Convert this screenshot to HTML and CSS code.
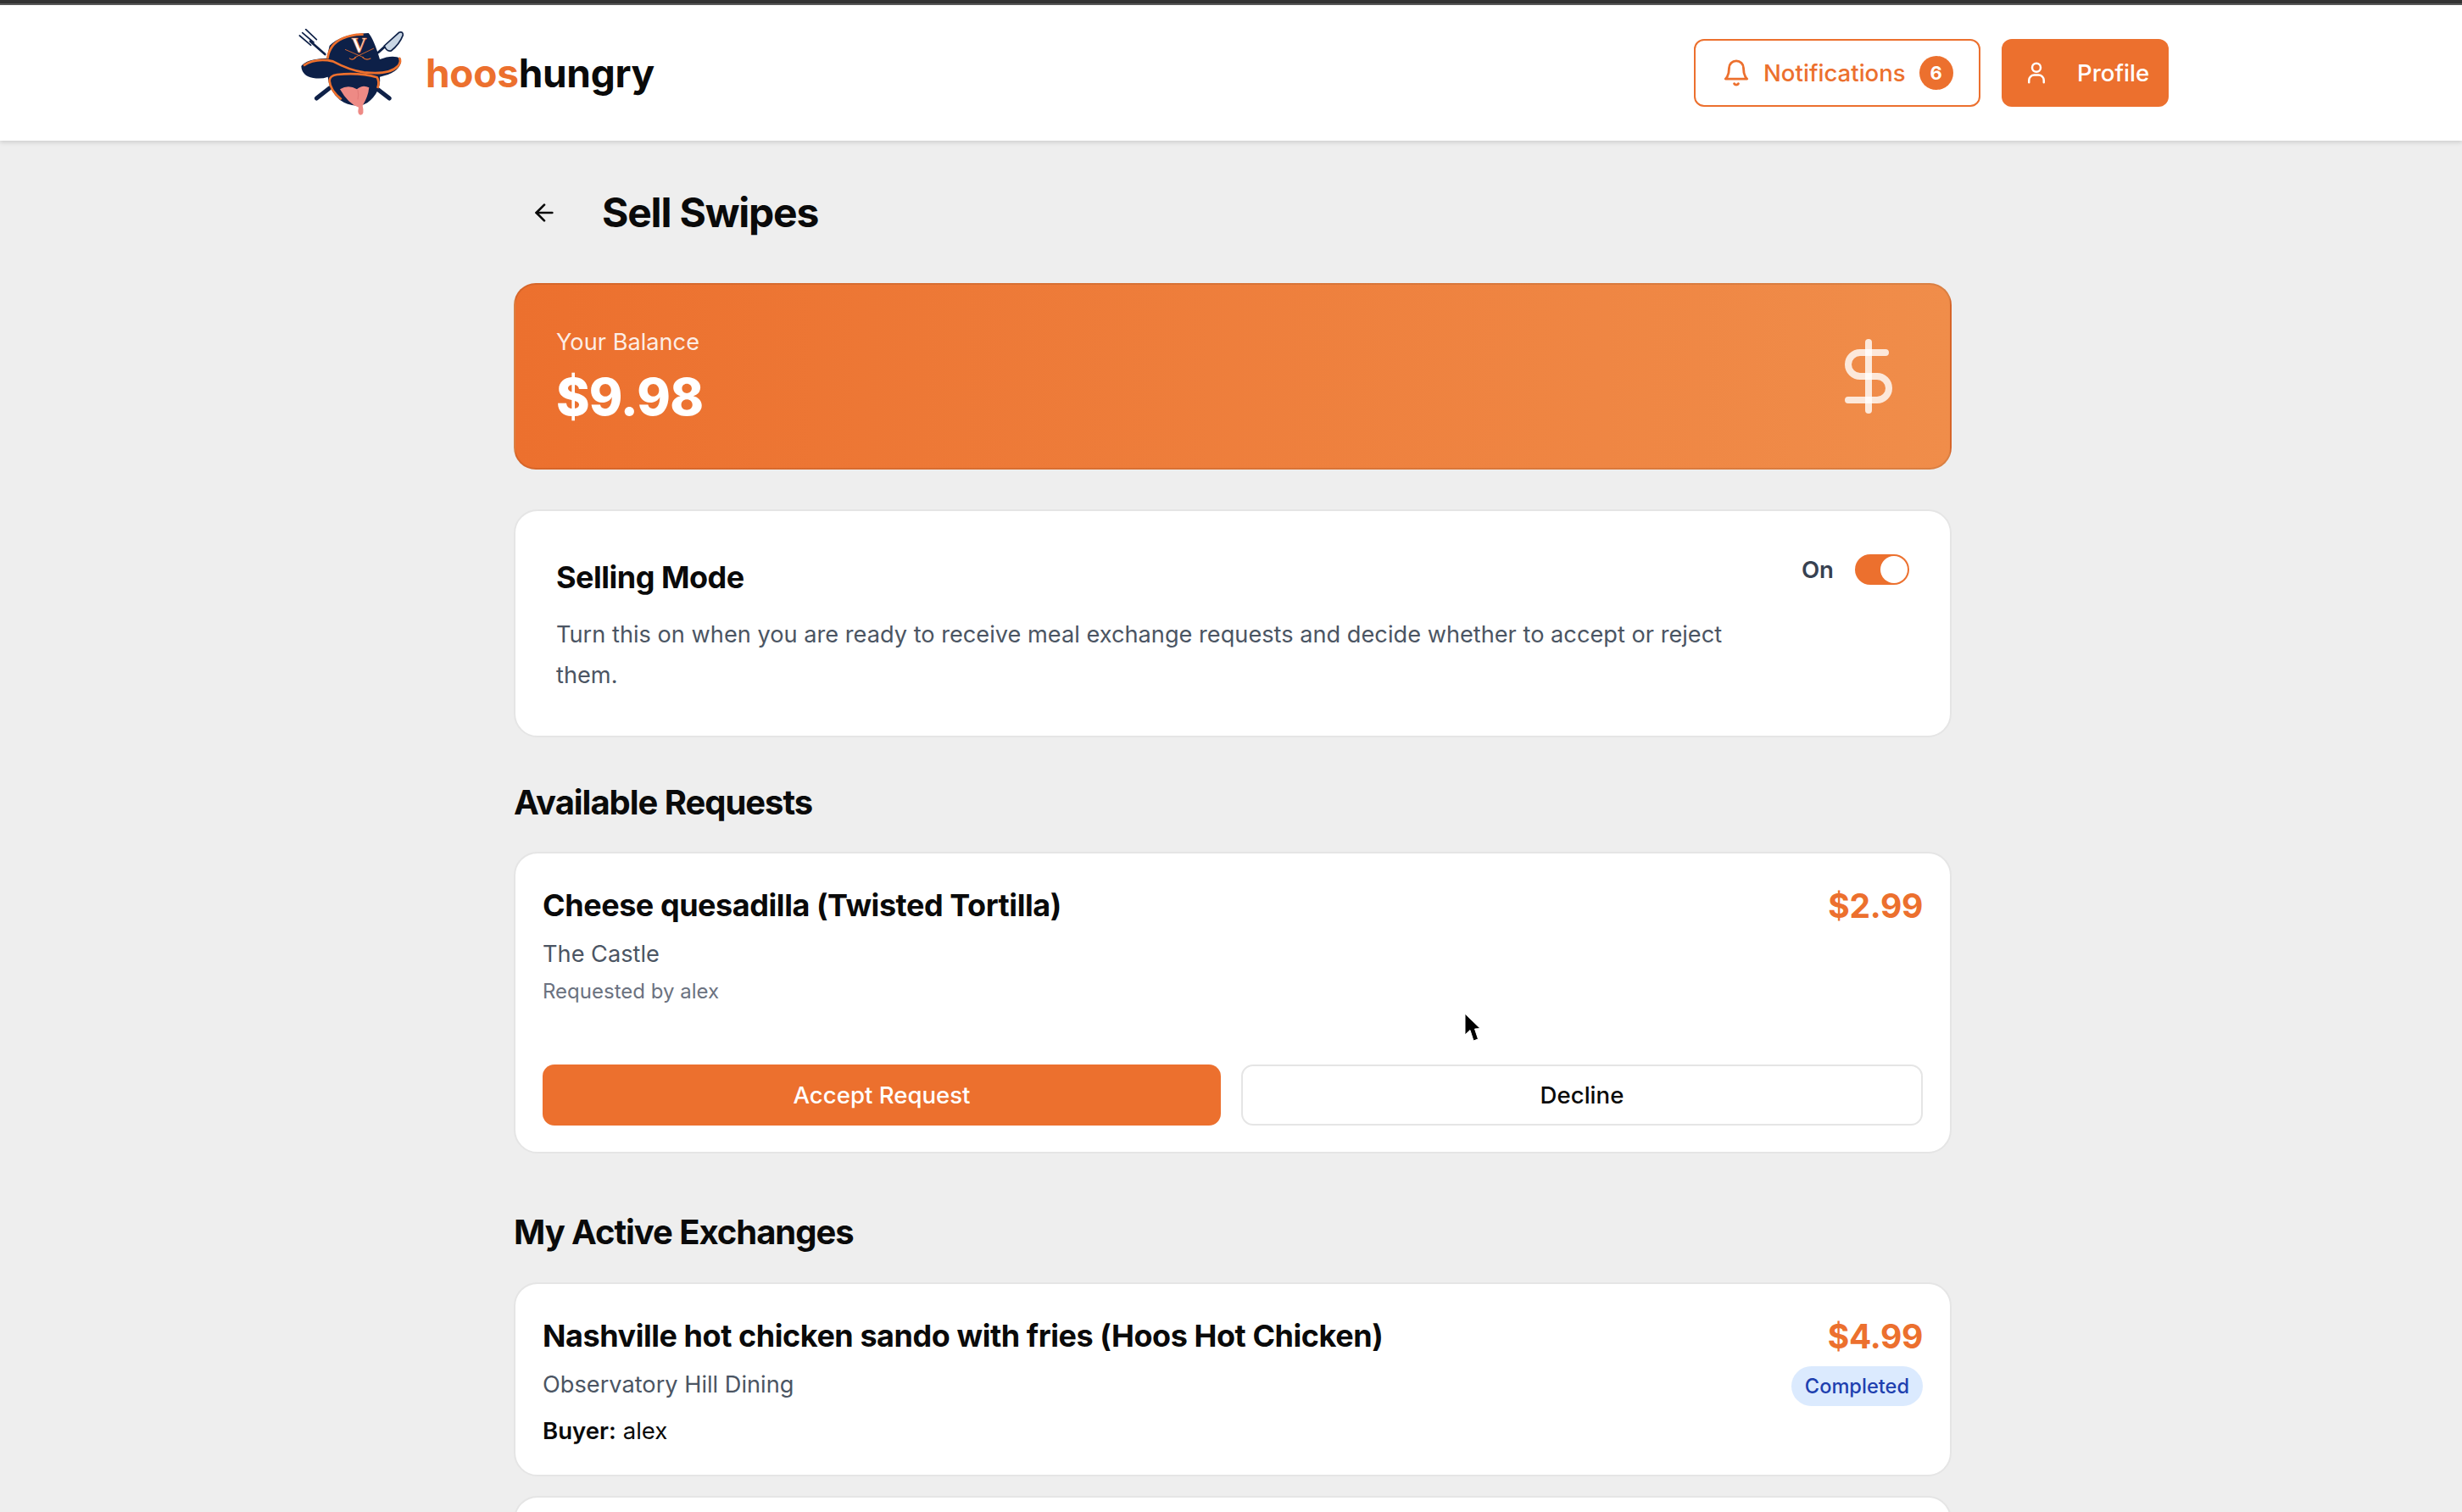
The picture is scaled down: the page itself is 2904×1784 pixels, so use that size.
FILE: index.html
```html
<!DOCTYPE html>
<html lang="en">
<head>
<meta charset="utf-8">
<title>Sell Swipes</title>
<link rel="stylesheet" href="styles.css">
</head>
<body>
<div class="topline"></div>
<header class="header">
  <a class="brand">
    <svg class="logo" viewBox="18 18 384 312">
      <g fill="none" stroke="#0f2148" stroke-linecap="round">
        <path d="M82 264L128 228M340 264L296 230" stroke-width="15"/>
        <path d="M112 108L60 62" stroke-width="8"/>
        <path d="M22 42L62 76M32 32L72 66M44 20L82 56" stroke-width="5"/>
        <path d="M300 102L336 70" stroke-width="9"/>
      </g>
      <path d="M322 78L374 31Q388 26 388 40Q376 72 346 96Q330 100 322 78Z" fill="#c9d6e4" stroke="#0f2148" stroke-width="5"/>
      <path d="M118 122L128 78Q170 35 266 33Q285 55 306 126Q350 108 380 122Q386 160 335 180L306 188Q312 240 262 280L240 290L224 290Q190 288 165 270Q125 235 122 188Q100 197 70 192Q30 185 28 150Q45 125 118 122Z" fill="#0d2048"/>
      <path d="M121 124Q128 72 175 52Q212 36 248 38" fill="none" stroke="#ee702d" stroke-width="8"/>
      <path d="M36 148Q78 120 140 133Q200 165 250 172Q340 182 370 150Q384 132 374 120" fill="none" stroke="#ee702d" stroke-width="8"/>
      <path d="M170 268Q130 235 128 202Q128 184 155 180Q235 172 296 190Q306 205 298 228" fill="none" stroke="#ee702d" stroke-width="8"/>
      <path d="M183 91L250 120M285 87L216 120" fill="none" stroke="#ee702d" stroke-width="2.500"/>
      <path d="M198 122Q210 132 222 118M244 118Q258 132 274 122" fill="none" stroke="#ee702d" stroke-width="3.500"/>
      <text class="logo-v" x="232" y="103" text-anchor="middle">V</text>
      <path d="M165 232Q195 214 225 232Q245 214 268 226Q265 258 245 290Q253 322 238 323Q225 322 231 296Q195 285 165 232Z" fill="#ee8a85"/>
      <path d="M228 234Q232 252 228 268" fill="none" stroke="#d96f6c" stroke-width="2"/>
    </svg>
    <span class="wordmark"><span class="accent">hoos</span>hungry</span>
  </a>
  <nav class="actions">
    <button class="btn-notify">
      <svg class="ico-bell" viewBox="0 0 24 24" fill="none" stroke="currentColor" stroke-width="2" stroke-linecap="round" stroke-linejoin="round"><path d="M6 8a6 6 0 0 1 12 0c0 7 3 9 3 9H3s3-2 3-9"/><path d="M10.300 21a1.940 1.940 0 0 0 3.400 0"/></svg>
      <span class="notify-label">Notifications</span>
      <span class="badge">6</span>
    </button>
    <button class="btn-profile">
      <svg class="ico-user" viewBox="0 0 24 24" fill="none" stroke="currentColor" stroke-width="2" stroke-linecap="round" stroke-linejoin="round"><circle cx="12" cy="7" r="4"/><path d="M5 21v-2a5 5 0 0 1 5-5h4a5 5 0 0 1 5 5v2"/></svg>
      <span>Profile</span>
    </button>
  </nav>
</header>
<main class="main">
  <div class="title-row">
    <svg class="ico-back" viewBox="0 0 24 24" fill="none" stroke="currentColor" stroke-width="2" stroke-linecap="round" stroke-linejoin="round"><path d="m12 19-7-7 7-7"/><path d="M19 12H5"/></svg>
    <h1 class="page-title">Sell Swipes</h1>
  </div>
  <section class="balance">
    <div>
      <div class="balance-label">Your Balance</div>
      <div class="balance-value">$9.98</div>
    </div>
    <svg class="ico-dollar" viewBox="0 0 24 24" fill="none" stroke="currentColor" stroke-width="2" stroke-linecap="round" stroke-linejoin="round"><line x1="12" y1="2" x2="12" y2="22"/><path d="M17 5H9.500a3.500 3.500 0 0 0 0 7h5a3.500 3.500 0 0 1 0 7H6"/></svg>
  </section>
  <section class="card selling">
    <div class="selling-text">
      <h2 class="selling-title">Selling Mode</h2>
      <p class="selling-desc">Turn this on when you are ready to receive meal exchange requests and decide whether to accept or reject them.</p>
    </div>
    <div class="toggle-wrap">
      <span class="toggle-label">On</span>
      <span class="toggle"><span class="knob"></span></span>
    </div>
  </section>
  <h2 class="section-title first">Available Requests</h2>
  <section class="card item request">
    <div class="item-top">
      <div>
        <h3 class="item-title">Cheese quesadilla (Twisted Tortilla)</h3>
        <div class="item-place">The Castle</div>
        <div class="item-by">Requested by alex</div>
      </div>
      <div class="item-price">$2.99</div>
    </div>
    <div class="item-actions">
      <button class="btn-accept">Accept Request</button>
      <button class="btn-decline">Decline</button>
    </div>
  </section>
  <h2 class="section-title second">My Active Exchanges</h2>
  <section class="card item">
    <div class="item-top">
      <div>
        <h3 class="item-title">Nashville hot chicken sando with fries (Hoos Hot Chicken)</h3>
        <div class="item-place">Observatory Hill Dining</div>
        <div class="item-buyer"><strong>Buyer:</strong> alex</div>
      </div>
      <div class="item-side">
        <div class="item-price">$4.99</div>
        <span class="pill">Completed</span>
      </div>
    </div>
  </section>
  <section class="card next-card"></section>
</main>
<svg class="cursor" viewBox="0 0 20 35"><path d="M1 1L1 26L7 20.500L11 33L16.500 31L12.500 19L19 18.500Z" fill="#000" stroke="#fff" stroke-width="1"/></svg>
</body>
</html>
```
FILE: styles.css
```css
* { box-sizing: border-box; }
html, body { margin: 0; padding: 0; }
body {
  height: 1784px;
  overflow: hidden;
  background: #eeeeee;
  font-family: Inter, "Liberation Sans", sans-serif;
  color: #0a0a0a;
  position: relative;
}
h1, h2, h3, p { margin: 0; }
button { font-family: inherit; cursor: pointer; }

.topline { height: 6px; background: #333; border-bottom: 2px solid #5a5a5a; }

.header {
  height: 160px;
  background: #fff;
  box-shadow: 0 2px 5px rgba(0, 0, 0, 0.14);
  display: flex;
  align-items: center;
  justify-content: space-between;
  padding: 0 346px 0 352px;
  position: relative;
}
.brand { display: flex; align-items: center; gap: 22px; }
.logo { width: 128px; height: 104px; display: block; }
.logo-v { font-family: "Liberation Serif", serif; font-weight: 700; font-size: 74px; fill: #fff; stroke: #ee702d; stroke-width: 2px; }
.wordmark { font-size: 46px; font-weight: 700; letter-spacing: -0.3px; line-height: 56px; }
.accent { color: #ec702e; }

.actions { display: flex; gap: 25px; }
.btn-notify {
  width: 338px; height: 80px;
  background: #fff;
  color: #ec702e;
  border: 2px solid #ec702e;
  border-radius: 12px;
  display: flex; align-items: center;
  padding: 0 0 0 31px;
  font-size: 27.6px; font-weight: 500;
}
.ico-bell { width: 34px; height: 34px; flex: none; }
.notify-label { margin-left: 15px; }
.badge {
  width: 40px; height: 40px; border-radius: 50%;
  background: #ec702e; color: #fff;
  font-size: 22px; font-weight: 700;
  display: flex; align-items: center; justify-content: center;
  margin-left: 16px;
}
.btn-profile {
  width: 197px; height: 80px;
  background: #ec702e; color: #fff;
  border: 0; border-radius: 12px;
  display: flex; align-items: center;
  padding: 0 0 0 26px;
  font-size: 27.6px; font-weight: 500;
}
.ico-user { width: 30px; height: 30px; flex: none; margin-right: 33px; }

.main { width: 1696px; margin-left: 606px; padding-top: 57px; }

.title-row { display: flex; align-items: center; height: 56px; margin-bottom: 55px; padding-left: 20px; }
.ico-back { width: 32px; height: 32px; flex: none; }
.page-title { font-size: 48px; font-weight: 700; letter-spacing: -1.2px; margin-left: 52px; line-height: 56px; }

.balance {
  height: 220px;
  border: 2px solid rgba(0, 0, 0, 0.09);
  border-radius: 26px;
  background: linear-gradient(90deg, #ec702e, #f08d4a);
  display: flex; align-items: center; justify-content: space-between;
  padding: 0 48px;
  color: #fff;
}
.balance-label { font-size: 27.2px; line-height: 36px; color: rgba(255, 255, 255, 0.9); }
.balance-value { font-size: 60px; font-weight: 800; line-height: 68px; margin-top: 12px; letter-spacing: -0.8px; }
.ico-dollar { width: 96px; height: 96px; color: rgba(255, 255, 255, 0.8); }

.card { background: #fff; border: 2px solid #e5e5e5; border-radius: 28px; }

.selling {
  height: 269px;
  margin-top: 47px;
  padding: 52px 48px 0;
  display: flex; justify-content: space-between; align-items: flex-start;
}
.selling-text { width: 1420px; }
.selling-title { font-size: 36px; font-weight: 700; letter-spacing: -0.5px; line-height: 52px; }
.selling-desc { font-size: 27.2px; line-height: 48px; color: #4b5563; margin-top: 18px; }
.toggle-wrap { display: flex; align-items: center; gap: 25px; margin-top: -1px; }
.toggle-label { font-size: 27.6px; font-weight: 600; color: #374151; }
.toggle { width: 64px; height: 36px; border-radius: 18px; background: #ec702e; padding: 2px; display: flex; justify-content: flex-end; }
.knob { width: 32px; height: 32px; border-radius: 50%; background: #fff; }

.section-title { font-size: 40px; font-weight: 700; letter-spacing: -1.05px; line-height: 44px; }
.section-title.first { margin-top: 55px; margin-bottom: 36px; }
.section-title.second { margin-top: 71px; margin-bottom: 37px; }

.item { padding: 34px 32px; }
.item.request { padding-bottom: 31px; }
.item + .card { margin-top: 23px; }
.item-top { display: flex; justify-content: space-between; align-items: flex-start; }
.item-title { font-size: 36px; font-weight: 700; letter-spacing: -0.45px; line-height: 54px; }
.item-place { font-size: 27.2px; line-height: 40px; color: #4b5563; margin-top: 11px; }
.item-by { font-size: 24px; line-height: 34px; color: #6b7280; margin-top: 7px; }
.item-buyer { font-size: 27.6px; line-height: 36px; margin-top: 16px; }
.item-buyer strong { font-weight: 600; }
.item-price { font-size: 39px; font-weight: 700; letter-spacing: -0.3px; color: #ec702e; line-height: 56px; }
.item-side { display: flex; flex-direction: column; align-items: flex-end; }
.pill {
  height: 47px; margin-top: 7px; padding: 0 16px;
  border-radius: 24px;
  background: #dbeafe; color: #1e40af;
  font-size: 23.6px; font-weight: 500;
  display: flex; align-items: center;
}
.item-actions { display: flex; gap: 24px; margin-top: 69px; }
.btn-accept, .btn-decline { flex: 1; height: 72px; border-radius: 14px; font-size: 27.6px; font-weight: 500; }
.btn-accept { background: #ec702e; color: #fff; border: 0; }
.btn-decline { background: #fff; color: #0a0a0a; border: 2px solid #e5e5e5; }
.next-card { height: 200px; }

.cursor { position: absolute; left: 1727px; top: 1195px; width: 20px; height: 35px; }
```
